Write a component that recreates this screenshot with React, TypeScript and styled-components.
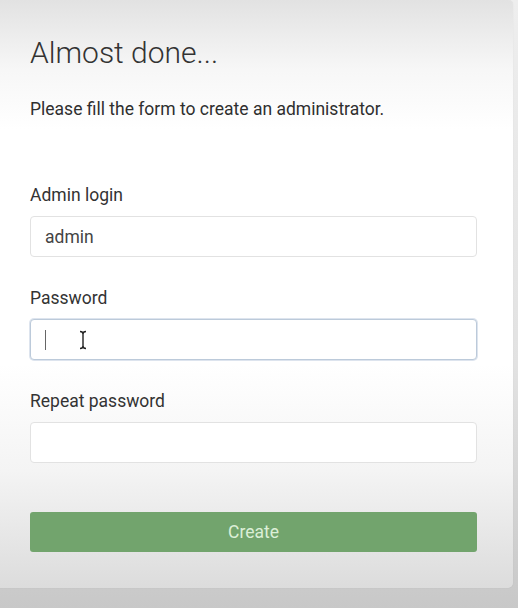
import React from 'react'
import styled, {createGlobalStyle} from 'styled-components'

const GlobalStyle = createGlobalStyle`
    html, body {
        margin: 0;
        padding: 0;
        height: 100%;
        overflow: hidden;
    }
    body {
        font-family: Roboto, "Liberation Sans", Arial, sans-serif;
        background: linear-gradient(180deg, #eeeeee 0%, #e2e2e2 60%, #c8c8c8 100%);
    }
`

const Page = styled.div`
    width: 518px;
    height: 608px;
    display: flex;
    align-items: flex-start;
`

const Card = styled.div`
    margin-left: -6px;
    width: 519px;
    height: 588px;
    box-sizing: border-box;
    padding: 35px 36px 36px 36px;
    border-radius: 0 5px 5px 0;
    background: linear-gradient(180deg, #e2e2e2 0%, #f7f7f7 12%, #ffffff 22%, #ffffff 62%, #f4f4f4 80%, #dcdcdc 100%);
    box-shadow: 0 0 1px rgba(0, 0, 0, 0.15);
    display: flex;
    flex-direction: column;
    color: #333;
`

const Title = styled.h1`
    margin: 0;
    font-size: 30px;
    font-weight: 300;
    line-height: 36px;
    color: #333;
`

const Intro = styled.p`
    margin: 26px 0 0;
    font-size: 17.5px;
    line-height: 24px;
    color: #2f2f2f;
`

const Form = styled.div`
    margin-top: 62px;
    display: flex;
    flex-direction: column;
    gap: 29px;
`

const Group = styled.div`
    display: flex;
    flex-direction: column;
    gap: 9px;
`

const Label = styled.label`
    font-size: 17.5px;
    line-height: 24px;
    color: #333;
`

const Field = styled.div<{focused?: boolean}>`
    position: relative;
    height: 41px;
    box-sizing: border-box;
    border-radius: 4px;
    background: #fff;
    border: 1px solid ${props => props.focused ? '#bccada' : '#e2e2e2'};
    box-shadow: ${props => props.focused ? '0 0 0 1px #dde4ee' : 'none'};
    display: flex;
    align-items: center;
    padding: 0 14px;
    font-size: 17.5px;
    color: #444;
`

const Caret = styled.span`
    width: 1px;
    height: 20px;
    background: #666;
`

const Beam = styled.svg`
    position: absolute;
    left: 48px;
    top: 10px;
`

const Button = styled.button`
    margin-top: 49px;
    height: 40px;
    border: none;
    border-radius: 3px;
    background: #72a46d;
    color: #dcefd7;
    font-family: Roboto, "Liberation Sans", Arial, sans-serif;
    font-size: 17.5px;
    cursor: pointer;
`

function App() {
    return (
        <Page>
            <GlobalStyle />
            <Card>
                <Title>Almost done...</Title>
                <Intro>Please fill the form to create an administrator.</Intro>
                <Form>
                    <Group>
                        <Label>Admin login</Label>
                        <Field>admin</Field>
                    </Group>
                    <Group>
                        <Label>Password</Label>
                        <Field focused>
                            <Caret />
                            <Beam width="8" height="20" viewBox="0 0 8 20">
                                <path d="M1 1.5 Q4 1.5 4 4 L4 16 Q4 18.5 1 18.5 M7 1.5 Q4 1.5 4 4 M4 16 Q4 18.5 7 18.5" stroke="#222" strokeWidth="1.4" fill="none" />
                            </Beam>
                        </Field>
                    </Group>
                    <Group>
                        <Label>Repeat password</Label>
                        <Field />
                    </Group>
                </Form>
                <Button>Create</Button>
            </Card>
        </Page>
    )
}

export default App
